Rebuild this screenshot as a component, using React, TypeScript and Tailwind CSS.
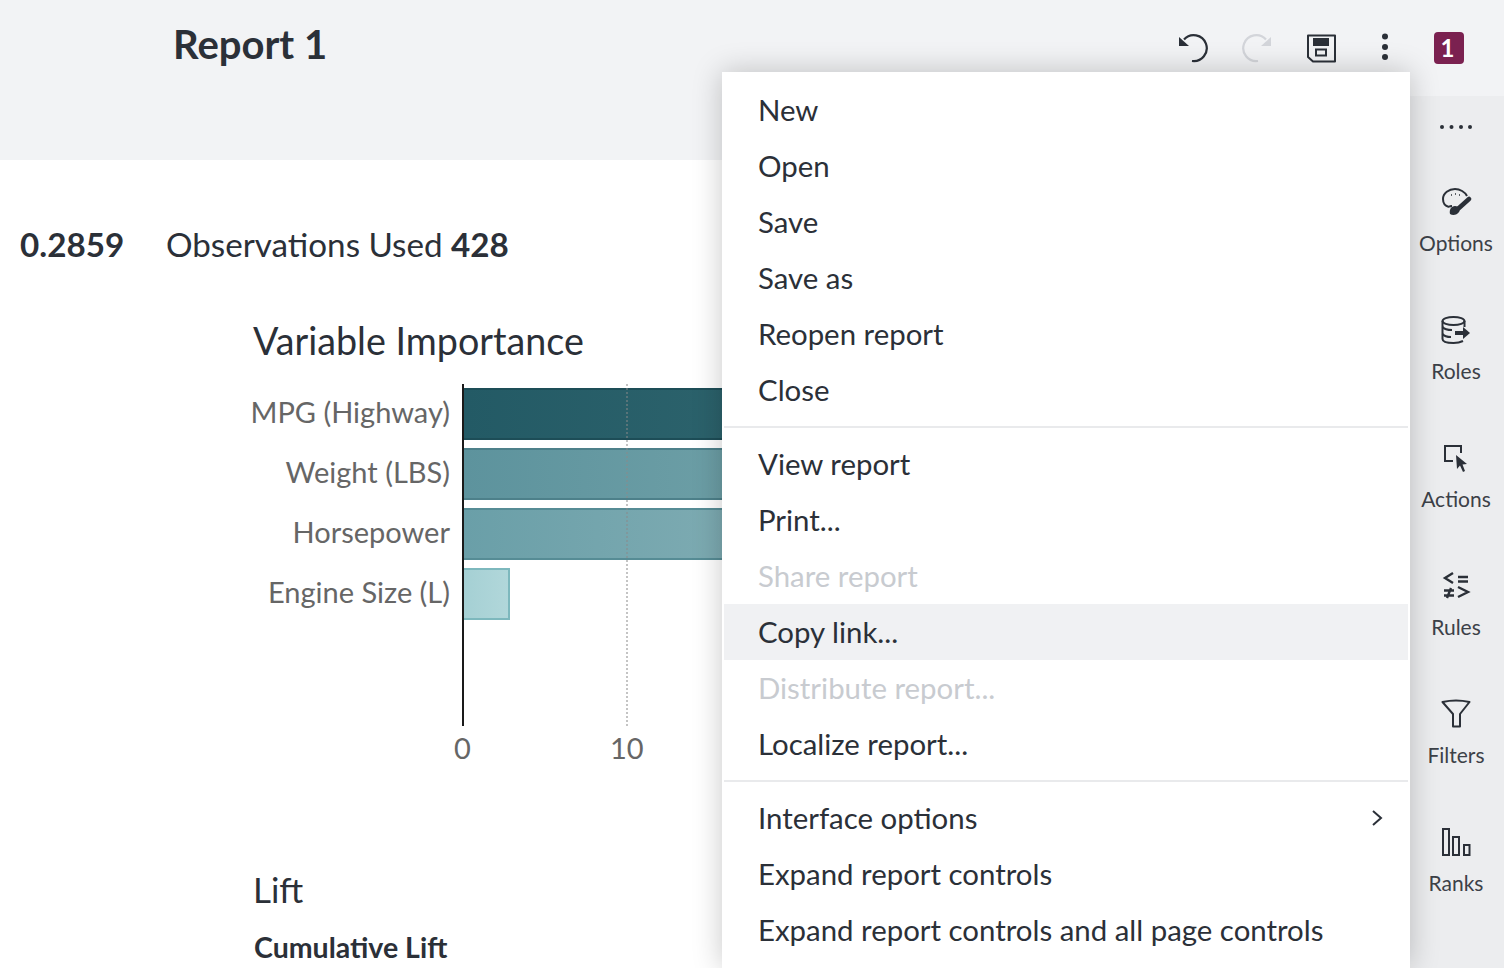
const menuGroups = [
  [
    { label: "New" },
    { label: "Open" },
    { label: "Save" },
    { label: "Save as" },
    { label: "Reopen report" },
    { label: "Close" },
  ],
  [
    { label: "View report" },
    { label: "Print..." },
    { label: "Share report", disabled: true },
    { label: "Copy link...", active: true },
    { label: "Distribute report...", disabled: true },
    { label: "Localize report..." },
  ],
  [
    { label: "Interface options", submenu: true },
    { label: "Expand report controls" },
    { label: "Expand report controls and all page controls" },
  ],
];

const bars = [
  { label: "MPG (Highway)", width: "w-[400px]", color: "from-[#235a65] to-[#30666f] border-[#1d4d57]" },
  { label: "Weight (LBS)", width: "w-[400px]", color: "from-[#5d939d] to-[#74a4aa] border-[#4d808a]" },
  { label: "Horsepower", width: "w-[400px]", color: "from-[#6a9fa8] to-[#87b1b7] border-[#568c95]" },
  { label: "Engine Size (L)", width: "w-[46px]", color: "from-[#a5d0d4] to-[#b1d7da] border-[#7db8bd]" },
];

const OptionsIcon = () => (
  <svg width="32" height="32" viewBox="0 0 32 32" fill="none" stroke="#2b3038" strokeWidth="2">
    <path d="M9 21C5 20 3 17 3 13C3 7 9 3 15 3C20 3 25 6 27 10" />
    <path d="M9 21C10 20 11 20 12 20" />
    <path d="M11 9h1M15 8h1M19 9h1" strokeWidth="1.5" />
    <path d="M29 13L19 22" strokeWidth="4.5" strokeLinecap="round" />
    <path d="M10 28C9 24 11 20 15 20C19 20 21 23 19 26C17 29 13 30 10 28Z" fill="#2b3038" stroke="none" />
  </svg>
);

const RolesIcon = () => (
  <svg width="32" height="32" viewBox="0 0 32 32" fill="none" stroke="#2b3038" strokeWidth="2">
    <ellipse cx="13.5" cy="7" rx="11" ry="4" />
    <path d="M2.5 7V25C2.5 28 8 29 13.5 29C17 29 20 28.500 23 27" />
    <path d="M2.500 13C5 16 9 16 12 16M2.500 20C5 23 8 23 11 23M24.500 7V13" />
    <path d="M15 19H24" strokeWidth="4" />
    <path d="M23 13L30 19L23 25Z" fill="#2b3038" stroke="none" />
  </svg>
);

const ActionsIcon = () => (
  <svg width="32" height="32" viewBox="0 0 32 32" fill="none">
    <path d="M13 19H5V4H21V11" stroke="#2b3038" strokeWidth="2" />
    <path d="M16 13L17 27L20 23.500L23 30L25 29L22.500 22.500L27 22Z" fill="#2b3038" />
  </svg>
);

const RulesIcon = () => (
  <svg width="32" height="32" viewBox="0 0 32 32" fill="none" stroke="#2b3038" strokeWidth="2.400">
    <path d="M13 3L5 8L13 13M18 7H28M18 11.500H28M4 20.500H14M4 25.500H14M11 18L7 28M18 17L28 22L18 27" />
  </svg>
);

const FiltersIcon = () => (
  <svg width="32" height="32" viewBox="0 0 32 32" fill="none" stroke="#2b3038" strokeWidth="2">
    <path d="M2.500 4Q16 1 29.500 4L20 16V28.500H13V16Z" strokeLinejoin="round" />
  </svg>
);

const RanksIcon = () => (
  <svg width="32" height="32" viewBox="0 0 32 32" fill="none" stroke="#2b3038" strokeWidth="2">
    <rect x="3" y="3" width="6" height="26" />
    <rect x="13" y="11" width="6" height="18" />
    <rect x="24" y="19" width="5.500" height="10" />
  </svg>
);

const rail = [
  { label: "Options", icon: <OptionsIcon /> },
  { label: "Roles", icon: <RolesIcon /> },
  { label: "Actions", icon: <ActionsIcon /> },
  { label: "Rules", icon: <RulesIcon /> },
  { label: "Filters", icon: <FiltersIcon /> },
  { label: "Ranks", icon: <RanksIcon /> },
];

const Header = () => (
  <div className="h-24 shrink-0 flex justify-between bg-[#f2f3f5]">
    <div className="pl-[173px] pt-[18px] text-[40px] leading-[52px] font-bold text-[#2b3038]">Report 1</div>
    <div className="flex items-start pt-8 pr-10 gap-[33px]">
      <div className="flex gap-8">
        {/* Undo */}
        <svg width="32" height="32" viewBox="0 0 32 32" fill="none">
          <path d="M7 7.500A13 13 0 1 1 15 29" stroke="#2b3038" strokeWidth="2.200" />
          <path d="M2 5L2 14L12 14Z" fill="#2b3038" />
        </svg>
        {/* Redo */}
        <svg width="32" height="32" viewBox="0 0 32 32" fill="none">
          <path d="M25 7.500A13 13 0 1 0 17 29" stroke="#d3d5da" strokeWidth="2.200" />
          <path d="M30 5L30 14L20 14Z" fill="#d3d5da" />
        </svg>
        {/* Save */}
        <svg width="32" height="32" viewBox="0 0 32 32" fill="none">
          <path d="M3 3.500H30V29.500H8L3 25Z" stroke="#2b3038" strokeWidth="2" strokeLinejoin="round" />
          <rect x="8" y="6" width="16" height="8" fill="#2b3038" />
          <rect x="11" y="17.500" width="10" height="6" stroke="#2b3038" strokeWidth="2" />
        </svg>
        {/* More */}
        <svg width="32" height="32" viewBox="0 0 32 32" fill="#2b3038">
          <circle cx="16" cy="4.500" r="3" />
          <circle cx="16" cy="15" r="3" />
          <circle cx="16" cy="25" r="3" />
        </svg>
      </div>
      <div className="w-[30px] h-8 pr-[3px] rounded-sm bg-[#7b2150] text-white text-[24px] leading-8 font-bold text-center">1</div>
    </div>
  </div>
);

const Chart = () => (
  <div className="flex">
    <div className="w-[210px] pt-[2px] text-right text-[29px] text-[#666] shrink-0">
      {bars.map((bar) => (
        <div key={bar.label} className="h-[60px] leading-[52px]">
          {bar.label}
        </div>
      ))}
    </div>
    <div className="ml-[12px]">
      <div className="relative h-[342px] w-[500px] border-l-2 border-[#1a1a1a] pt-1 flex flex-col gap-2">
        {bars.map((bar) => (
          <div key={bar.label} className={`h-[52px] border-2 border-l-0 bg-gradient-to-r ${bar.width} ${bar.color}`} />
        ))}
        {/* Grid line */}
        <div className="absolute left-[162px] top-0 bottom-0 border-l-2 border-dotted border-[#8a8a8a]/50" />
      </div>
      <div className="relative h-10 text-[29px] leading-10 text-[#666]">
        <span className="absolute -left-[8px] top-[2px]">0</span>
        <span className="absolute left-[148px] top-[2px]">10</span>
      </div>
    </div>
  </div>
);

const Main = () => (
  <div className="flex-1 min-w-0 flex flex-col">
    <div className="h-16 shrink-0 bg-[#f2f3f5]" />
    <div className="flex-1 bg-white overflow-hidden">
      <div className="pl-5 pt-[62px] flex text-[33.200px] leading-[44px] text-[#2b3038]">
        <span className="font-bold w-[146px]">0.2859</span>
        <span>
          Observations Used <span className="font-bold">428</span>
        </span>
      </div>
      <div className="pl-[253px] pt-[51px] pb-[19px] text-[37.700px] leading-[48px] text-[#2b3038]">Variable Importance</div>
      <div className="pl-[240px]">
        <Chart />
      </div>
      <div className="pl-[253px] pt-[99px] text-[35px] leading-[48px] text-[#2b3038]">Lift</div>
      <div className="pl-[254px] pt-[16px] text-[28.500px] leading-[36px] font-bold text-[#2b3038]">Cumulative Lift</div>
    </div>
  </div>
);

const Rail = () => (
  <div className="w-[94px] shrink-0 bg-[#ecedef] flex flex-col items-center pt-[25px] pr-[2px]">
    <svg width="34" height="12" viewBox="0 0 34 12" fill="#2b3038" className="shrink-0">
      <circle cx="3" cy="6" r="2" />
      <circle cx="12.500" cy="6" r="2" />
      <circle cx="22" cy="6" r="2" />
      <circle cx="31" cy="6" r="2" />
    </svg>
    <div className="pt-[53px] flex flex-col gap-[40px]">
      {rail.map((item) => (
        <div key={item.label} className="h-[88px] flex flex-col items-center">
          <div className="h-8 w-8">{item.icon}</div>
          <div className="pt-[11px] text-[21px] leading-7 text-[#3c4148]">{item.label}</div>
        </div>
      ))}
    </div>
  </div>
);

const Menu = () => (
  <div className="absolute left-[722px] top-[72px] bottom-0 w-[688px] bg-white px-[2px] pt-[10px] shadow-[0_0_28px_rgba(0,0,0,0.22)]">
    {menuGroups.map((group, i) => (
      <div key={i} className={i > 0 ? "border-t-2 border-[#e9eaec] mt-2 pt-2" : ""}>
        {group.map((item) => (
          <div
            key={item.label}
            className={`h-14 flex items-center justify-between pl-[34px] pr-6 text-[29.400px] ${
              item.disabled ? "text-[#c8cbd0]" : "text-[#2b3038]"
            } ${item.active ? "bg-[#f0f1f3]" : ""}`}
          >
            <span>{item.label}</span>
            {item.submenu && (
              <svg width="14" height="18" viewBox="0 0 14 18" fill="none" stroke="#2b3038" strokeWidth="2">
                <path d="M3 2L11 9L3 16" />
              </svg>
            )}
          </div>
        ))}
      </div>
    ))}
  </div>
);

export default function App() {
  return (
    <div className="relative w-[1504px] h-[968px] overflow-hidden flex flex-col bg-[#f2f3f5] font-[family-name:Lato,sans-serif]">
      <Header />
      <div className="flex-1 min-h-0 flex">
        <Main />
        <Rail />
      </div>
      <Menu />
    </div>
  );
}
